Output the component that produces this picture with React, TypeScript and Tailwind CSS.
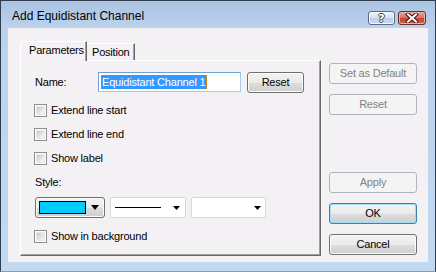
import React from "react";

const FONT = "font-['Liberation_Sans',Arial,sans-serif]";

function Checkbox({ label }: { label: string }) {
  return (
    <div className="flex items-center h-[13px]">
      <div className="w-[13px] h-[13px] border border-[#8f8f8f] bg-white p-px">
        <div className="w-full h-full bg-gradient-to-br from-[#cdcdcd] to-[#f7f7f7] border border-[#e9e9e9]" />
      </div>
      <span className="ml-[4px] text-[11px] leading-[13px] tracking-[-0.2px] text-black">{label}</span>
    </div>
  );
}

function Btn({
  label,
  disabled,
  def,
  className = "",
}: {
  label: string;
  disabled?: boolean;
  def?: boolean;
  className?: string;
}) {
  if (disabled) {
    return (
      <div
        className={`h-[21px] w-[88px] rounded-[3px] border border-[#b1b5ba] bg-[#f4f4f4] flex items-center justify-center text-[11px] tracking-[-0.2px] text-[#838383] ${className}`}
      >
        {label}
      </div>
    );
  }
  return (
    <div
      className={`h-[21px] rounded-[3px] border ${
        def ? "border-[#3c7fb1] shadow-[inset_0_0_0_1px_#9fdcf7]" : "border-[#707070] shadow-[inset_0_0_0_1px_#fbfbfb]"
      } bg-[linear-gradient(to_bottom,#f2f2f2_0%,#ebebeb_50%,#dddddd_51%,#cfcfcf_100%)] flex items-center justify-center text-[11px] tracking-[-0.2px] text-black ${className}`}
    >
      {label}
    </div>
  );
}

function Tri() {
  return (
    <svg width="7" height="4" viewBox="0 0 7 4">
      <path d="M0 0 H7 L3.5 4 Z" fill="#000" />
    </svg>
  );
}

export default function App() {
  return (
    <div className={`${FONT} w-[436px] h-[272px] bg-white`}>
      <div className="w-[436px] h-[272px] flex flex-col border border-[#2f3d4d] border-b-[#22c4ec] bg-[linear-gradient(to_bottom,#a9c3e2_0px,#bdd3ed_28px,#c3d8f1_100%)]">
        {/* Title bar */}
        <div className="h-[27px] flex items-start">
          <div className="pl-[11px] pt-[8px] text-[12px] leading-[15px] text-black flex-1">
            Add Equidistant Channel
          </div>
          <div className="flex pt-[10px] pr-[9px] gap-[3px]">
            <div className="w-[27px] h-[14px] rounded-[3px] border border-[#5b6d85] bg-[linear-gradient(to_bottom,#eef3fa_0%,#d6e2f1_50%,#bccee6_51%,#cbdcf0_100%)] flex items-center justify-center shadow-[inset_0_0_0_1px_#f4f8fc]">
              <span className="font-['DejaVu_Sans',sans-serif] font-bold text-[11px] leading-[11px] text-white [text-shadow:1px_0_#3a4658,-1px_0_#3a4658,0_1px_#3a4658,0_-1px_#3a4658]">
                ?
              </span>
            </div>
            <div className="w-[28px] h-[14px] rounded-[3px] border border-[#6a2b25] bg-[linear-gradient(to_bottom,#e6a99f_0%,#d7786a_45%,#c4432f_55%,#cf6a50_100%)] flex items-center justify-center shadow-[inset_0_0_0_1px_#e8b0a6]">
              <svg width="14" height="10" viewBox="0 0 14 10">
                <path d="M3 1.5 L11 8.5 M11 1.5 L3 8.5" stroke="#4a1510" strokeWidth="4" strokeLinecap="square" />
                <path d="M3 1.5 L11 8.5 M11 1.5 L3 8.5" stroke="#ffffff" strokeWidth="2" strokeLinecap="square" />
              </svg>
            </div>
          </div>
        </div>
        {/* Client row */}
        <div className="flex px-[7px]">
          <div className="w-[420px] h-[234px] bg-[#f4f1f4] flex pl-[12px] pt-[13px] text-[11px] text-black">
            {/* Left column: tabs + panel */}
            <div className="w-[301px] flex flex-col">
              <div className="flex items-end h-[19px]">
                <div className="relative z-10 h-[20px] mb-[-1px] w-[67px] bg-[#f4f1f4] border-t border-l border-white border-r border-r-[#696969] shadow-[inset_-1px_0_0_#a0a0a0] rounded-tl-[2px] flex items-start pl-[8px] pt-[2px] tracking-[-0.2px] leading-[13px]">
                  Parameters
                </div>
                <div className="h-[17px] w-[48px] bg-[#f4f1f4] border-t border-white border-r border-r-[#696969] shadow-[inset_-1px_0_0_#a0a0a0] flex items-start pl-[5px] pt-[2px] tracking-[-0.2px] leading-[13px]">
                  Position
                </div>
              </div>
              <div className="h-[196px] border-t border-l border-white border-r border-b border-r-[#696969] border-b-[#696969] shadow-[inset_-1px_-1px_0_#a0a0a0] flex flex-col pl-[13px]">
                <div className="mt-[11px] flex items-center h-[20px]">
                  <span className="ml-px w-[63px] tracking-[-0.2px]">Name:</span>
                  <div className="w-[143px] h-[20px] border border-[#6f9fd3] border-r-[#a9cbee] border-b-[#a9cbee] bg-white flex items-center pl-[2px]">
                    <span className="bg-[#3399ff] text-white leading-[14px] tracking-[-0.2px] px-px">
                      Equidistant Channel 1
                    </span>
                    <span className="w-px h-[14px] bg-[#c97a22]" />
                  </div>
                  <Btn label="Reset" className="w-[57px] ml-[6px] h-[20px]" />
                </div>
                <div className="mt-[12px] flex flex-col gap-[11px]">
                  <Checkbox label="Extend line start" />
                  <Checkbox label="Extend line end" />
                  <Checkbox label="Show label" />
                </div>
                <div className="mt-[11px] ml-px leading-[13px] tracking-[-0.2px]">Style:</div>
                <div className="mt-[8px] ml-px flex gap-[5px]">
                  <div className="w-[70px] h-[21px] rounded-[3px] border border-[#707070] bg-[linear-gradient(to_bottom,#f2f2f2_0%,#ebebeb_50%,#dddddd_51%,#cfcfcf_100%)] flex items-center pl-[3px] shadow-[inset_0_0_0_1px_#fbfbfb]">
                    <div className="w-[47px] h-[13px] border border-black bg-[#00ccff]" />
                    <div className="ml-[5px]">
                      <svg width="8" height="5" viewBox="0 0 8 5">
                        <path d="M0 0 H8 L4 5 Z" fill="#000" />
                      </svg>
                    </div>
                  </div>
                  <div className="w-[76px] h-[21px] rounded-[2px] border border-[#d9d9d9] bg-white flex items-center pl-[4px]">
                    <div className="w-[46px] h-px bg-black" />
                    <div className="ml-[12px]">
                      <Tri />
                    </div>
                  </div>
                  <div className="w-[75px] h-[21px] rounded-[2px] border border-[#d9d9d9] bg-white flex items-center justify-end pr-[4px]">
                    <Tri />
                  </div>
                </div>
                <div className="mt-[12px]">
                  <Checkbox label="Show in background" />
                </div>
              </div>
            </div>
            {/* Right column */}
            <div className="ml-[8px] w-[88px] flex flex-col pt-[22px]">
              <Btn label="Set as Default" disabled />
              <Btn label="Reset" disabled className="mt-[10px]" />
              <Btn label="Apply" disabled className="mt-[57px]" />
              <Btn label="OK" def className="mt-[10px] w-[88px]" />
              <Btn label="Cancel" className="mt-[10px] w-[88px]" />
            </div>
          </div>
        </div>
      </div>
    </div>
  );
}
